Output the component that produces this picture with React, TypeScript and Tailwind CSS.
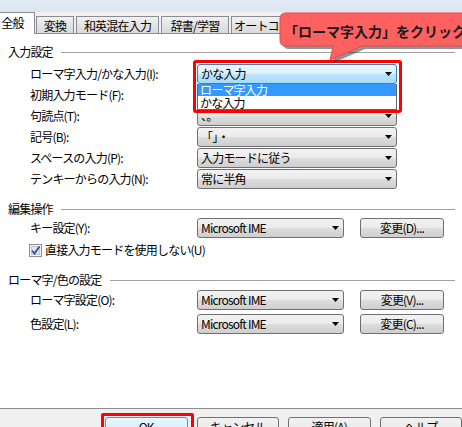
import React from "react";

const FONT = "font-['Noto_Sans_CJK_JP','Noto_Sans',sans-serif]";

function Arrow() {
  return (
    <svg width="7" height="4" viewBox="0 0 7 4" className="shrink-0">
      <path d="M0 0 H7 L3.5 4 Z" fill="#000" />
    </svg>
  );
}

function Combo({ text, w, active = false }: { text: string; w: string; active?: boolean }) {
  return (
    <div
      className={`${w} h-[20px] rounded-[3px] border flex items-center justify-between pl-[3px] pr-[4px] ${
        active
          ? "border-[#3c7fb1] bg-[linear-gradient(#eaf6fd_0%,#d9f0fc_50%,#bee6fd_50%,#a7d9f5_100%)]"
          : "border-[#707070] bg-[linear-gradient(#f2f2f2_0%,#ebebeb_50%,#dddddd_50%,#cfcfcf_100%)]"
      }`}
    >
      <span className="whitespace-nowrap">{text}</span>
      <Arrow />
    </div>
  );
}

function Btn({ text }: { text: string }) {
  return (
    <div className="w-[84px] h-[20px] rounded-[3px] border border-[#707070] bg-[linear-gradient(#f2f2f2_0%,#ebebeb_50%,#dddddd_50%,#cfcfcf_100%)] flex items-center justify-center">
      {text}
    </div>
  );
}

function BarButton({ text, focus = false }: { text: string; focus?: boolean }) {
  return (
    <div
      className={`w-[85px] h-[23px] rounded-[3px] border flex justify-center pt-[2px] ${
        focus
          ? "border-[#3399ff] bg-[linear-gradient(#eaf6fd_0%,#d9f0fc_50%,#bee6fd_50%,#a7d9f5_100%)]"
          : "border-[#707070] bg-[linear-gradient(#f2f2f2_0%,#ebebeb_50%,#dddddd_50%,#cfcfcf_100%)]"
      }`}
    >
      {text}
    </div>
  );
}

function Group({ label, className = "" }: { label: string; className?: string }) {
  return (
    <div className={`flex items-center h-[14px] pl-[8px] pr-[7px] ${className}`}>
      <span>{label}</span>
      <div className="ml-[8px] flex-1 h-px bg-[#a0a0a0]" />
    </div>
  );
}

function Row({ label, children, className = "" }: { label: string; children: React.ReactNode; className?: string }) {
  return (
    <div className={`flex items-center h-[20px] pl-[30px] ${className}`}>
      <span className="w-[167px] shrink-0">{label}</span>
      {children}
    </div>
  );
}

function Tab({ text, w, clip = false }: { text: string; w: string; clip?: boolean }) {
  return (
    <div
      className={`${w} h-[18px] mr-[2px] border border-b-0 border-[#898c95] bg-[linear-gradient(#f2f2f2,#e3e3e3_50%,#d9d9d9)] flex items-center shrink-0 ${
        clip ? "overflow-hidden justify-start pl-[2px]" : "justify-center"
      }`}
    >
      <span className="whitespace-nowrap">{text}</span>
    </div>
  );
}

export default function App() {
  return (
    <div className={`relative w-[462px] h-[427px] overflow-hidden bg-white text-[12px] leading-[14px] tracking-[-0.8px] text-black ${FONT}`}>
      {/* window chrome strip */}
      <div className="h-[12px] bg-[linear-gradient(#e4ecf6,#dbe5f1)]" />

      {/* tab strip */}
      <div className="relative h-[22px] flex items-end bg-[#f0f0f0]">
        <div className="absolute left-0 right-0 bottom-0 h-px bg-[#898c95]" />
        <div className="relative z-10 ml-[-14px] w-[49px] h-[22px] mr-px border border-b-0 border-[#898c95] bg-white flex items-center justify-center pl-[14px] pr-[10px] pb-[1px]">
          全般
        </div>
        <Tab text="変換" w="w-[38px]" />
        <Tab text="和英混在入力" w="w-[83px]" />
        <Tab text="辞書/学習" w="w-[68px]" />
        <Tab text="オートコレクト" w="w-[60px]" clip />
      </div>

      {/* page body */}
      <div className="flex flex-col h-[374px] bg-white pt-[11px]">
        <Group label="入力設定" />
        <div className="mt-[5px] flex flex-col gap-px">
          <Row label="ローマ字入力/かな入力(I):">
            <Combo text="かな入力" w="w-[200px]" active />
          </Row>
          <Row label="初期入力モード(F):">
            <Combo text="" w="w-[200px]" />
          </Row>
          <Row label="句読点(T):">
            <Combo text="、。" w="w-[200px]" />
          </Row>
          <Row label="記号(B):">
            <Combo text="「」・" w="w-[200px]" />
          </Row>
          <Row label="スペースの入力(P):">
            <Combo text="入力モードに従う" w="w-[200px]" />
          </Row>
          <Row label="テンキーからの入力(N):">
            <Combo text="常に半角" w="w-[200px]" />
          </Row>
        </div>

        <Group label="編集操作" className="mt-[13px]" />
        <Row label="キー設定(Y):" className="mt-[2px]">
          <Combo text="Microsoft IME" w="w-[147px]" />
          <div className="ml-[16px]">
            <Btn text="変更(D)..." />
          </div>
        </Row>
        <div className="mt-[5px] h-[14px] flex items-center pl-[29px]">
          <svg width="13" height="13" viewBox="0 0 13 13" className="shrink-0">
            <rect x="0.5" y="0.5" width="12" height="12" fill="#f4f4f4" stroke="#8e8f8f" />
            <rect x="2.5" y="2.5" width="8" height="8" fill="#e0e3e8" stroke="#c3c8ce" />
            <path d="M3 6.5 L5.5 9.5 L10.5 2.5" fill="none" stroke="#2c4f9e" strokeWidth="1.8" />
          </svg>
          <span className="ml-[3px]">直接入力モードを使用しない(U)</span>
        </div>

        <Group label="ローマ字/色の設定" className="mt-[16px]" />
        <Row label="ローマ字設定(O):" className="mt-[3px]">
          <Combo text="Microsoft IME" w="w-[147px]" />
          <div className="ml-[16px]">
            <Btn text="変更(V)..." />
          </div>
        </Row>
        <Row label="色設定(L):" className="mt-[4px]">
          <Combo text="Microsoft IME" w="w-[147px]" />
          <div className="ml-[16px]">
            <Btn text="変更(C)..." />
          </div>
        </Row>
      </div>

      {/* dialog button bar */}
      <div className="h-[19px] border-t border-[#8e8e8e] bg-[#f0f0f0] flex gap-[9px] pl-[105px] pt-[8px]">
        <BarButton text="OK" focus />
        <BarButton text="キャンセル" />
        <BarButton text="適用(A)" />
        <BarButton text="ヘルプ" />
      </div>

      {/* open dropdown list */}
      <div className="absolute left-[197px] top-[84px] w-[200px] h-[26px] bg-white border border-[#646464] border-t-0 flex flex-col">
        <div className="h-[12px] bg-[#3399ff] text-white pl-[2px] leading-[12px]">ローマ字入力</div>
        <div className="h-[13px] pl-[2px] leading-[13px]">かな入力</div>
      </div>

      {/* red highlight frames */}
      <div className="absolute left-[193px] top-[60px] w-[209px] h-[53px] border-[3px] border-[#ff0000] rounded-[3px]" />
      <div className="absolute left-[101px] top-[413px] w-[93px] h-[20px] border-[3px] border-[#ff0000] rounded-[2px]" />

      {/* callout bubble */}
      <svg className="absolute left-[270px] top-[8px]" width="200" height="60" viewBox="0 0 200 60">
        <path
          d="M16 5 H200 V38 H92 L60 52 L63 38 H16 Q10 38 10 32 V11 Q10 5 16 5 Z"
          fill="#3a3a3a"
          opacity="0.55"
          transform="translate(3 3)"
        />
        <path
          d="M16 5 H200 V38 H92 L60 52 L63 38 H16 Q10 38 10 32 V11 Q10 5 16 5 Z"
          fill="#ff6161"
          stroke="#e24b4b"
          strokeWidth="1"
        />
      </svg>
      <div className="absolute left-[284px] top-[22px] text-[14px] leading-[18px] font-bold tracking-[0px] text-[#1a1a1a] whitespace-nowrap">
        「ローマ字入力」をクリック
      </div>
    </div>
  );
}
